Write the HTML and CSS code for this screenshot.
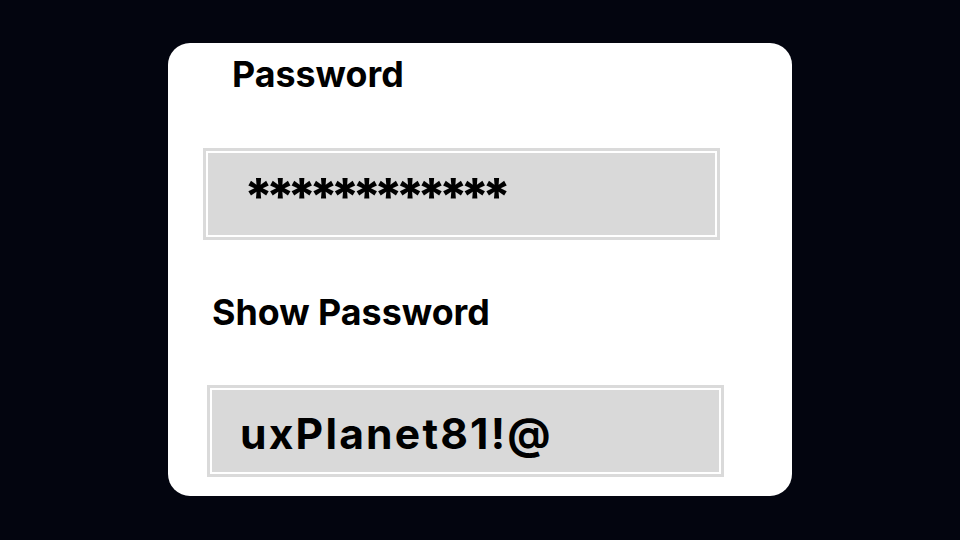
FILE: index.html
```html
<!DOCTYPE html>
<html>
<head>
<meta charset="utf-8">
<link rel="stylesheet" href="styles.css">
</head>
<body>
<div class="card">
  <div class="label label-first">Password</div>
  <div class="field field-first"><span class="mask">************</span></div>
  <div class="label label-second">Show Password</div>
  <div class="field field-second"><span class="plain">uxPlanet81!@</span></div>
</div>
</body>
</html>
```

FILE: styles.css
```css
html, body {
  margin: 0;
  padding: 0;
}
body {
  width: 960px;
  height: 540px;
  background: #03050f;
  font-family: "Inter", "Liberation Sans", sans-serif;
  color: #000;
  overflow: hidden;
  padding-top: 43px;
  box-sizing: border-box;
}
.card {
  margin-left: 168px;
  width: 624px;
  height: 453px;
  background: #fff;
  border-radius: 22px;
  display: flex;
  flex-direction: column;
  align-items: flex-start;
  box-sizing: border-box;
}
.label {
  font-weight: 700;
  font-size: 35.8px;
  line-height: 40px;
}
.label-first {
  margin-left: 64px;
  margin-top: 11px;
}
.field {
  width: 517px;
  height: 92px;
  box-sizing: border-box;
  background: #d9d9d9;
  border: 3px solid #dadada;
  box-shadow: inset 0 0 0 2px #fff;
  display: flex;
  align-items: center;
}
.field-first {
  margin-left: 35px;
  margin-top: 54px;
}
.mask {
  font-weight: 800;
  font-size: 50px;
  letter-spacing: -7.5px;
  line-height: 50px;
  margin-left: 38px;
  margin-top: 4px;
}
.label-second {
  margin-left: 44px;
  margin-top: 52px;
}
.field-second {
  margin-left: 39px;
  margin-top: 53px;
}
.plain {
  font-weight: 700;
  font-size: 42.6px;
  letter-spacing: 2.2px;
  margin-left: 30px;
  margin-top: 4px;
}
```
